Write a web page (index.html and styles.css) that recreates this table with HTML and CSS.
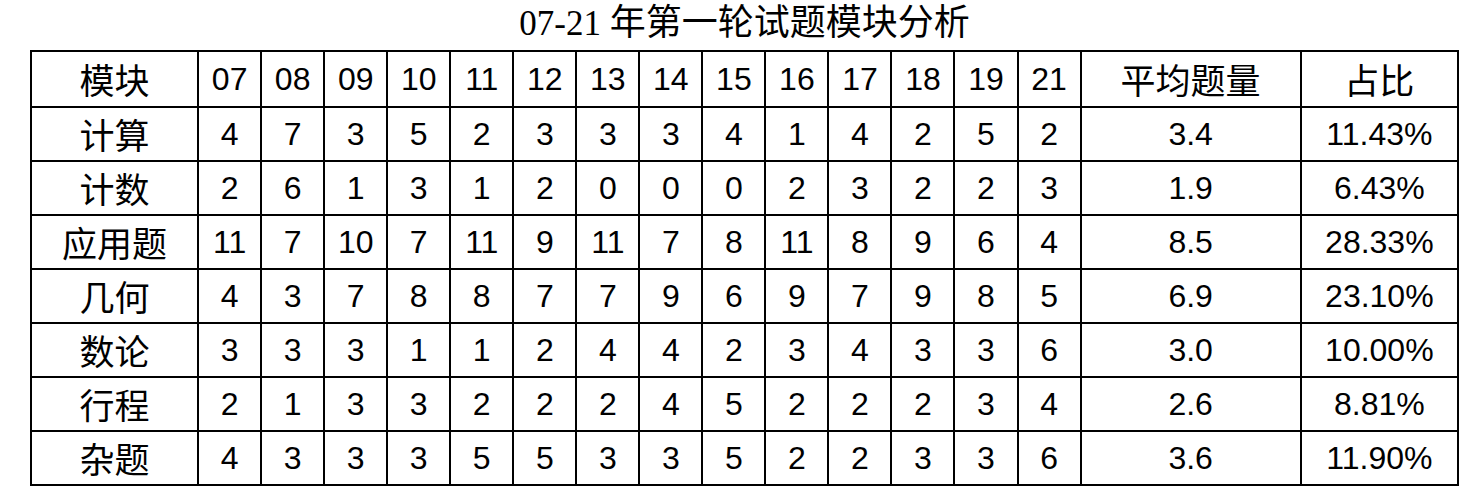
FILE: index.html
```html
<!DOCTYPE html>
<html lang="zh-CN">
<head>
<meta charset="utf-8">
<title>07-21 年第一轮试题模块分析</title>
<link rel="stylesheet" href="styles.css">
</head>
<body>
<div class="page">
  <h1 class="title"><span class="title-num">07-21</span> <span class="title-zh">年第一轮试题模块分析</span></h1>
  <table class="grid">
    <colgroup>
      <col class="c-name">
      <col class="c-year"><col class="c-year"><col class="c-year"><col class="c-year"><col class="c-year"><col class="c-year"><col class="c-year">
      <col class="c-year"><col class="c-year"><col class="c-year"><col class="c-year"><col class="c-year"><col class="c-year"><col class="c-year">
      <col class="c-avg">
      <col class="c-pct">
    </colgroup>
    <thead>
      <tr class="head">
        <th class="zh">模块</th>
        <th>07</th><th>08</th><th>09</th><th>10</th><th>11</th><th>12</th><th>13</th><th>14</th><th>15</th><th>16</th><th>17</th><th>18</th><th>19</th><th>21</th>
        <th class="zh">平均题量</th>
        <th class="zh">占比</th>
      </tr>
    </thead>
    <tbody>
      <tr><td class="zh">计算</td><td>4</td><td>7</td><td>3</td><td>5</td><td>2</td><td>3</td><td>3</td><td>3</td><td>4</td><td>1</td><td>4</td><td>2</td><td>5</td><td>2</td><td>3.4</td><td>11.43%</td></tr>
      <tr><td class="zh">计数</td><td>2</td><td>6</td><td>1</td><td>3</td><td>1</td><td>2</td><td>0</td><td>0</td><td>0</td><td>2</td><td>3</td><td>2</td><td>2</td><td>3</td><td>1.9</td><td>6.43%</td></tr>
      <tr><td class="zh">应用题</td><td>11</td><td>7</td><td>10</td><td>7</td><td>11</td><td>9</td><td>11</td><td>7</td><td>8</td><td>11</td><td>8</td><td>9</td><td>6</td><td>4</td><td>8.5</td><td>28.33%</td></tr>
      <tr><td class="zh">几何</td><td>4</td><td>3</td><td>7</td><td>8</td><td>8</td><td>7</td><td>7</td><td>9</td><td>6</td><td>9</td><td>7</td><td>9</td><td>8</td><td>5</td><td>6.9</td><td>23.10%</td></tr>
      <tr><td class="zh">数论</td><td>3</td><td>3</td><td>3</td><td>1</td><td>1</td><td>2</td><td>4</td><td>4</td><td>2</td><td>3</td><td>4</td><td>3</td><td>3</td><td>6</td><td>3.0</td><td>10.00%</td></tr>
      <tr><td class="zh">行程</td><td>2</td><td>1</td><td>3</td><td>3</td><td>2</td><td>2</td><td>2</td><td>4</td><td>5</td><td>2</td><td>2</td><td>2</td><td>3</td><td>4</td><td>2.6</td><td>8.81%</td></tr>
      <tr><td class="zh">杂题</td><td>4</td><td>3</td><td>3</td><td>3</td><td>5</td><td>5</td><td>3</td><td>3</td><td>5</td><td>2</td><td>2</td><td>3</td><td>3</td><td>6</td><td>3.6</td><td>11.90%</td></tr>
    </tbody>
  </table>
</div>
</body>
</html>
```

FILE: styles.css
```css
html, body {
  margin: 0;
  padding: 0;
  background: #ffffff;
  color: #000000;
}

.page {
  width: 1429px;
  padding-left: 30px;
}

.title {
  margin: 0;
  height: 50px;
  line-height: 38px;
  text-align: center;
  font-weight: normal;
  white-space: nowrap;
  font-family: "Liberation Serif", "Noto Sans CJK SC", serif;
  font-size: 35px;
}

.title-zh {
  font-family: "Noto Sans CJK SC", sans-serif;
  font-size: 36px;
}

.grid {
  border-collapse: collapse;
  table-layout: fixed;
  width: 1429px;
  font-family: "Liberation Sans", "Noto Sans CJK SC", sans-serif;
  font-size: 32px;
}

.c-name { width: 167px; }
.c-year { width: 63px; }
.c-avg { width: 220px; }
.c-pct { width: 157px; }

.grid th,
.grid td {
  border: 2px solid #000000;
  padding: 0;
  text-align: center;
  vertical-align: middle;
  font-weight: normal;
  height: 52px;
  line-height: 36px;
  white-space: nowrap;
}

.grid .head th {
  height: 54px;
}

.grid .zh {
  font-family: "Noto Sans CJK SC", sans-serif;
  font-size: 35px;
}
```
